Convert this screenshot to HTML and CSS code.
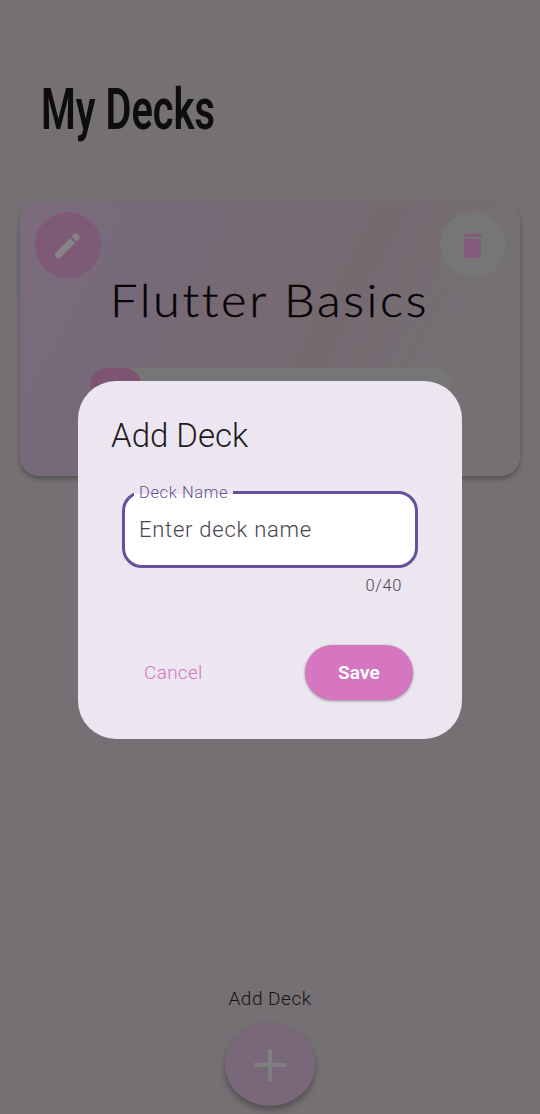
FILE: index.html
```html
<!DOCTYPE html>
<html lang="en">
<head>
<meta charset="utf-8">
<title>My Decks</title>
<link rel="stylesheet" href="styles.css">
</head>
<body>
<main class="screen">
  <h1 class="title"><svg width="220" height="84" viewBox="0 0 220 84"><text x="0" y="49" textLength="174" lengthAdjust="spacingAndGlyphs">My Decks</text></svg></h1>
  <section class="deck">
    <div class="deck-actions">
      <span class="round edit"><svg width="33" height="33" viewBox="0 0 24 24"><path d="M3 18.100V19.500Q3 21 4.500 21H5.900Q6.600 21 7.100 20.500L17.400 10.200 13.800 6.600 3.500 16.900Q3 17.400 3 18.100zM20.300 7.300a1.700 1.700 0 0 0 0-2.400L19.100 3.700a1.700 1.700 0 0 0-2.400 0L14.900 5.500 18.500 9.100z"/></svg></span>
      <span class="round delete"><svg width="33" height="33" viewBox="0 0 24 24"><path d="M6 19.500Q6 21 7.500 21h9Q18 21 18 19.500V7H6zM19 4.500Q15.500 3 12 3T5 4.500V5.800h14z"/></svg></span>
    </div>
    <h2 class="deck-name"><svg width="345" height="64" viewBox="0 0 345 64"><text x="-2" y="39" textLength="319" lengthAdjust="spacingAndGlyphs">Flutter Basics</text></svg></h2>
    <div class="progress"><div class="progress-fill"></div></div>
  </section>
  <footer class="add">
    <span class="add-label">Add Deck</span>
    <span class="fab"><svg width="34" height="34" viewBox="0 0 34 34"><path d="M17 1v32M1 17h32"/></svg></span>
  </footer>
</main>
<div class="overlay">
  <section class="dialog">
    <h2 class="dialog-title">Add Deck</h2>
    <div class="field">
      <span class="field-label">Deck Name</span>
      <span class="placeholder">Enter deck name</span>
    </div>
    <div class="counter">0/40</div>
    <div class="buttons">
      <span class="cancel">Cancel</span>
      <span class="save">Save</span>
    </div>
  </section>
</div>
</body>
</html>
```
FILE: styles.css
```css
* { box-sizing: border-box; }
body { margin: 0; font-family: Roboto, "Liberation Sans", sans-serif; }
h1, h2 { margin: 0; font-weight: 400; }
svg { display: block; flex: none; overflow: visible; }
.screen { position: relative; width: 540px; height: 1114px; padding: 80px 20px 0; background: #757073; display: flex; flex-direction: column; overflow: hidden; }
.title { height: 122px; padding-left: 21px; }
.title text { font: 600 58px Roboto, sans-serif; fill: #0d0c0e; }
.deck { height: 274px; border-radius: 20px; padding: 10px 14px 0 15px; background: linear-gradient(118deg, #7d6c7b 0%, #766a7a 24%, #776a72 42%, #766a71 60%, #747074 78%, #757173 100%); box-shadow: 0 3px 5px rgba(0,0,0,.28); }
.deck-actions { display: flex; justify-content: space-between; }
.round { width: 66px; height: 66px; border-radius: 50%; display: flex; align-items: center; justify-content: center; }
.edit { background: #7f5a77; }
.edit svg { margin-right: 2px; }
.edit path { fill: #858585; }
.delete { background: #757675; }
.delete svg { margin-right: 2px; }
.delete path { fill: #855b7b; }
.deck-name { height: 90px; padding-left: 77px; }
.deck-name text { font: 300 46px Lato, sans-serif; letter-spacing: 2.5px; font-variant-ligatures: none; fill: #050305; stroke: #050305; stroke-width: .4px; }
.progress { width: 361px; height: 33px; margin-left: 55px; border-radius: 16px; background: #757675; overflow: hidden; }
.progress-fill { width: 51px; height: 100%; border-radius: 16px; background: #7d5573; }
.add { margin-top: auto; height: 128px; display: flex; flex-direction: column; align-items: center; }
.add-label { height: 37px; line-height: 26px; font-size: 19px; font-weight: 350; letter-spacing: .5px; color: #151316; }
.fab { width: 90px; height: 83px; border-radius: 50%; background: #786879; display: flex; align-items: center; justify-content: center; box-shadow: 0 4px 6px rgba(0,0,0,.3); }
.fab path { stroke: #7f7f7f; stroke-width: 4; fill: none; }
.overlay { position: absolute; left: 0; top: 0; width: 540px; height: 1114px; padding-top: 381px; display: flex; justify-content: center; align-items: flex-start; }
.dialog { width: 384px; height: 358px; border-radius: 38px; background: #ece6f1; padding: 33px 44px 0; }
.dialog-title { height: 77px; margin-left: -11px; font-size: 33px; line-height: 43px; font-weight: 330; color: #1d1b20; }
.field { position: relative; height: 77px; border: 3px solid #65519c; border-radius: 20px; background: #fff; padding: 22px 14px; }
.field-label { position: absolute; left: 9px; top: -11px; width: 99px; height: 19px; padding-left: 5px; line-height: 20px; font-size: 16.5px; font-weight: 330; letter-spacing: .6px; color: #65519c; background: linear-gradient(#ece6f1 0 11px, #fff 11px); }
.placeholder { display: block; line-height: 27px; font-size: 22px; font-weight: 330; letter-spacing: .75px; color: #49454f; }
.counter { height: 77px; padding: 7px 16px 0; text-align: right; font-size: 16.5px; font-weight: 330; line-height: 21px; letter-spacing: .6px; color: #49454f; }
.buttons { display: flex; justify-content: space-between; align-items: center; padding: 0 5px 0 22px; }
.cancel { font-size: 19px; font-weight: 360; letter-spacing: .3px; color: #d675c0; }
.save { width: 108px; height: 55px; border-radius: 28px; display: flex; align-items: center; justify-content: center; background: #d675c0; color: #fff; font-size: 19px; font-weight: 600; letter-spacing: .2px; box-shadow: 0 1px 3px rgba(0,0,0,.4); }
```
